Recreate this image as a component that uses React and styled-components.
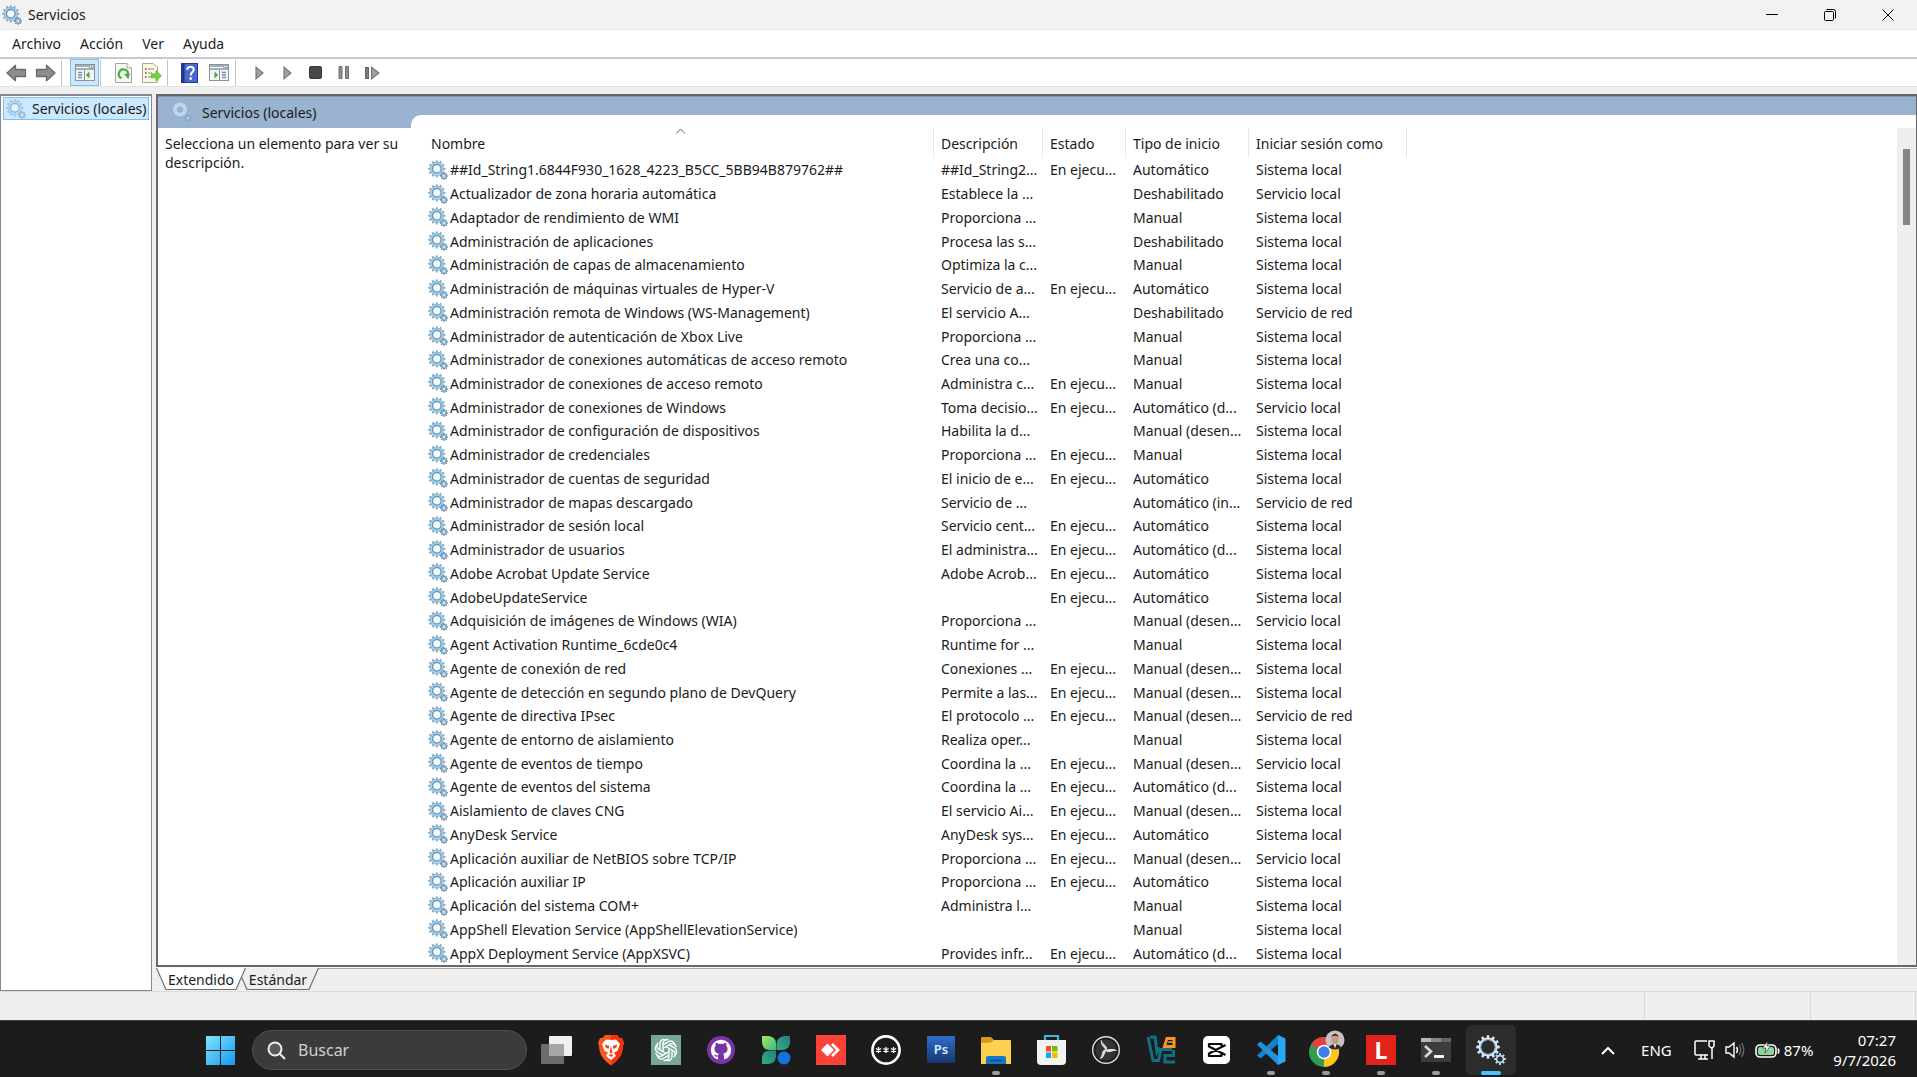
import React from 'react';
import styled, { createGlobalStyle } from 'styled-components';

const Global = createGlobalStyle`
  * { box-sizing: border-box; }
  html, body, #root { height: 100%; }
  body { margin: 0; font-family: "Noto Sans", "Open Sans", sans-serif; font-size: 14px; line-height: 19px; color: #1b1b1b; overflow: hidden; }
  button { font: inherit; color: inherit; background: none; border: 0; padding: 0; margin: 0; display: inline-flex; align-items: center; justify-content: center; }
  svg { display: block; flex: none; }
`;

const Screen = styled.div`
  height: 100%;
  display: flex;
  flex-direction: column;
  background: #efefef;
`;
const Window = styled.main`
  flex: 1;
  display: flex;
  flex-direction: column;
`;
const TitleBar = styled.header`
  height: 30px;
  display: flex;
  align-items: center;
  background: #f2f2f2;
  border-bottom: 1px solid #e6e6e6;
  padding-left: 2px;
`;
const Title = styled.h1`
  flex: 1;
  margin: 0;
  padding-left: 6px;
  font-size: 14px;
  line-height: 19px;
  font-weight: 400;
`;
const CaptionButton = styled.button`
  width: 58px;
  height: 29px;
`;
const MenuBar = styled.nav`
  height: 29px;
  display: flex;
  align-items: center;
  gap: 19px;
  padding: 0 12px;
  background: #fff;
  border-bottom: 2px solid #c9c9c9;
`;
const ToolBar = styled.div`
  height: 28px;
  display: flex;
  align-items: center;
  background: #fff;
  border-bottom: 1px solid #e3e3e3;
  padding-left: 2px;
`;
const ToolButton = styled.button`
  width: ${(p) => p.$w || 29}px;
  height: 27px;
  border: 1px solid ${(p) => (p.$on ? '#84bde8' : 'transparent')};
  background: ${(p) => (p.$on ? '#cce6fb' : 'none')};
`;
const ToolDivider = styled.span`
  width: 1px;
  height: 26px;
  background: #c4c4c4;
  margin: 0 ${(p) => p.$r}px 0 ${(p) => p.$l}px;
`;
const Body = styled.div`
  flex: 1;
  display: grid;
  grid-template-columns: 152px 1fr;
  column-gap: 4px;
  padding-top: 7px;
  border-bottom: 1px solid #dcdcdc;
`;
const Tree = styled.aside`
  background: #fff;
  border: 1px solid #82878f;
  border-top-width: 2px;
  padding: 1px 2px;
`;
const TreeItem = styled.button`
  && { justify-content: flex-start; }
  width: 100%;
  height: 23px;
  gap: 6px;
  padding-left: 2px;
  white-space: nowrap;
  background: #cce8ff;
  border: 1px solid #7cc0f2;
`;
const Content = styled.section`
  display: flex;
  flex-direction: column;
  min-width: 0;
`;
const Frame = styled.div`
  flex: 1;
  display: grid;
  grid-template-columns: 253px 1fr;
  background: #9ab3d1;
  border: 2px solid #686868;
  border-right-width: 1px;
  box-shadow: inset 0 1px 0 #8a929c;
`;
const Side = styled.div`
  display: flex;
  flex-direction: column;
`;
const SideHead = styled.div`
  height: 32px;
  display: flex;
  align-items: center;
  gap: 10px;
  padding-left: 14px;
`;
const SideText = styled.p`
  flex: 1;
  margin: 0;
  background: #fff;
  padding: 6px 6px 6px 7px;
`;
const ListPane = styled.div`
  margin-top: 19px;
  background: #fff;
  border-top-left-radius: 10px;
  display: grid;
  grid-template-columns: 1fr 19px;
`;
const Table = styled.table`
  display: flex;
  flex-direction: column;
  padding-top: 13px;
`;
const columns = '523px 109px 83px 123px 158px';
const Head = styled.thead`
  display: block;
`;
const HeadRow = styled.tr`
  display: grid;
  grid-template-columns: ${columns};
  height: 30px;
`;
const HeadCell = styled.th`
  position: relative;
  font-weight: 400;
  text-align: left;
  padding: 6px 0 0 ${(p) => (p.$first ? 20 : 7)}px;
  border-right: 1px solid #e9e9e9;
`;
const SortMark = styled.svg`
  position: absolute;
  top: 0;
  left: calc(50% + 3px);
`;
const Rows = styled.tbody`
  flex: 1;
  display: grid;
  grid-auto-rows: minmax(23px, 1fr);
`;
const Row = styled.tr`
  display: grid;
  grid-template-columns: ${columns};
  align-items: center;
`;
const Cell = styled.td`
  padding: 0 0 0 7px;
  white-space: nowrap;
  overflow: hidden;
`;
const NameCell = styled(Cell)`
  display: flex;
  align-items: center;
  gap: 2px;
  padding-left: 17px;
`;
const ScrollTrack = styled.div`
  margin-top: 13px;
  background: #efefef;
  display: flex;
  justify-content: center;
  padding-top: 21px;
`;
const ScrollThumb = styled.div`
  width: 7px;
  height: 76px;
  background: #868686;
`;
const Tabs = styled.div`
  height: 24px;
  display: flex;
  border-top: 1px solid #fafafa;
  box-shadow: inset 0 1px 0 #a9a9a9;
`;
const Tab = styled.button`
  position: relative;
  width: ${(p) => p.$w}px;
  height: 22px;
  margin-left: ${(p) => p.$pull}px;
  z-index: ${(p) => (p.$on ? 1 : 0)};
`;
const TabShape = styled.svg`
  position: absolute;
  inset: 0;
`;
const TabText = styled.span`
  position: relative;
`;
const StatusBar = styled.footer`
  height: 28px;
  display: grid;
  grid-template-columns: 1fr 166px 105px 1px;
`;
const StatusPart = styled.span`
  border-right: 1px solid #dadada;
`;
const TaskBar = styled.footer`
  height: 57px;
  display: flex;
  align-items: center;
  background: #1c1c1c;
  border-top: 1px solid #3c4242;
  color: #fff;
  padding: 2px 21px 0 192px;
`;
const StartButton = styled.button`
  width: 56px;
  height: 48px;
`;
const Search = styled.label`
  width: 275px;
  height: 40px;
  margin-left: 4px;
  display: flex;
  align-items: center;
  gap: 12px;
  padding: 0 14px;
  border: 1px solid #505050;
  border-radius: 20px;
  background: #3b3b3b;
`;
const SearchInput = styled.input`
  width: 180px;
  border: 0;
  padding: 0;
  outline: 0;
  background: none;
  font: inherit;
  font-size: 16px;
  color: #d0d0d0;
  &::placeholder { color: #d0d0d0; opacity: 1; }
`;
const Apps = styled.div`
  display: flex;
  gap: 5px;
  margin-left: 4px;
`;
const AppButton = styled.button`
  position: relative;
  width: 50px;
  height: 50px;
  border-radius: 5px;
  background: ${(p) => (p.$state === 'active' ? '#2c2c2c' : 'none')};
  &::after {
    content: "";
    display: ${(p) => (p.$state ? 'block' : 'none')};
    position: absolute;
    bottom: 0;
    width: ${(p) => (p.$state === 'active' ? 20 : 8)}px;
    height: 4px;
    border-radius: 2px;
    background: ${(p) => (p.$state === 'active' ? '#4cc2ff' : '#9a9a9a')};
  }
`;
const Tray = styled.div`
  margin-left: auto;
  display: flex;
  align-items: center;
  font-size: 15px;
`;
const TrayButton = styled.button`
  height: 40px;
  gap: 10px;
  margin-right: ${(p) => p.$mr}px;
`;
const Battery = styled.span`
  display: flex;
  align-items: center;
  gap: 4px;
`;
const Clock = styled.time`
  line-height: 20px;
  display: flex;
  flex-direction: column;
  align-items: flex-end;
`;

const gearPath = (cx, cy, r, teeth, depth) => {
  const points = [];
  for (let i = 0; i < teeth; i += 1) {
    [[-0.28, r - depth], [-0.2, r], [0.2, r], [0.28, r - depth]].forEach(([o, rad]) => {
      const a = ((i + o) / teeth) * Math.PI * 2;
      points.push(`${(cx + Math.sin(a) * rad).toFixed(2)} ${(cy - Math.cos(a) * rad).toFixed(2)}`);
    });
  }
  return `M${points.join('L')}Z`;
};
const bigGear = gearPath(8.8, 8.8, 8.7, 12, 1.7);
const smallGear = gearPath(16, 16, 4, 8, 1.1);
const brightGear = gearPath(8, 8, 7.9, 12, 1.6);

const Gears = ({ pale = false }) => (
  <svg width="20" height="20" viewBox="0 0 20 20" opacity={pale ? 0.6 : 1} aria-hidden="true">
    <path d={bigGear} fill="#86acc8" />
    <circle cx="8.8" cy="8.8" r="6.4" fill="#a9d3ec" />
    <circle cx="8.8" cy="8.8" r="4.4" fill="none" stroke="#6793b4" strokeWidth="1.1" />
    <circle cx="8.8" cy="8.8" r="3.3" fill="#f6fbfe" />
    <path d={smallGear} fill="#7296b2" />
    <circle cx="16" cy="16" r="1.9" fill="#a9cbe0" />
    <circle cx="16" cy="16" r="0.9" fill="#e4f1f8" />
  </svg>
);

const BrightGears = () => (
  <svg width="30" height="30" viewBox="0 0 20 20" aria-hidden="true">
    <path fillRule="evenodd" d={`${brightGear}M3.400 8A4.600 4.600 0 1 0 12.600 8A4.600 4.600 0 1 0 3.400 8Z`} fill="#d5e8f7" />
    <circle cx="8" cy="8" r="5" fill="none" stroke="#94b8d8" strokeWidth="0.7" />
    <path fillRule="evenodd" d={`${smallGear}M14.300 16A1.700 1.700 0 1 0 17.700 16A1.700 1.700 0 1 0 14.300 16Z`} fill="#b9d4ec" />
  </svg>
);

const HeaderGears = () => (
  <svg width="20" height="20" viewBox="0 0 20 20" aria-hidden="true">
    <circle cx="8" cy="7.5" r="5.6" fill="none" stroke="#b9d9ea" strokeWidth="2.8" />
    <circle cx="8" cy="7.5" r="4" fill="none" stroke="#dcecf5" strokeWidth="0.8" />
    <path d={smallGear} fill="#86aac6" />
    <circle cx="16" cy="16" r="1.3" fill="#b9d4e6" />
  </svg>
);

const Arrow = ({ flip }) => (
  <svg width="21" height="18" viewBox="0 0 21 18" aria-hidden="true">
    <path
      transform={flip ? 'translate(21 0) scale(-1 1)' : undefined}
      d="M1 9L9.5 1.2V5.5H19.5V12.5H9.5V16.8Z" fill="#8d8d8d" stroke="#6b6b6b" strokeWidth="1.3" strokeLinejoin="round"
    />
  </svg>
);

const PaneIcon = ({ flip }) => (
  <svg width="20" height="17" viewBox="0 0 20 17" aria-hidden="true">
    <rect x="0.5" y="0.5" width="19" height="16" fill="#f3f4f5" stroke="#8b949c" />
    <rect x="1" y="1" width="18" height="5" fill="#a4adb5" />
    <path d="M1 3.500H14M15 2.500H16M17 2.500H18" stroke="#fff" strokeWidth="1" />
    <g transform={flip ? 'translate(20 0) scale(-1 1)' : undefined}>
      <path d="M9.500 6V16" stroke="#8b949c" />
      <path d="M3 8.500H7M3 11H7M3 13.500H7" stroke="#6f93bd" strokeWidth="1.300" />
      <path d="M14.500 7.500V14.500L10.800 11Z" fill="#3fae2a" />
    </g>
  </svg>
);

const RefreshIcon = () => (
  <svg width="17" height="20" viewBox="0 0 17 20" aria-hidden="true">
    <path d="M0.5 0.5H12L16.5 5V19.5H0.5Z" fill="#f7f7f5" stroke="#a5a5a5" />
    <path d="M12 0.500V5H16.500" fill="#fff" stroke="#a5a5a5" />
    <path d="M6.500 15.200A4.600 4.600 0 1 1 13 11.500" fill="none" stroke="#3fb53a" strokeWidth="2.200" />
    <path d="M9 11L15 10.500L13.300 16.200Z" fill="#3fb53a" />
  </svg>
);

const ExportIcon = () => (
  <svg width="20" height="20" viewBox="0 0 20 20" aria-hidden="true">
    <path d="M0.5 0.5H11L15.5 4V19.5H0.5Z" fill="#faf6df" stroke="#ada88f" />
    <path d="M3 6H4.5M3 10H4.5M3 14H4.5" stroke="#555" strokeWidth="1.5" />
    <path d="M6 6H12M6 10H10M6 14H10" stroke="#8c8c8c" strokeWidth="1.2" />
    <path d="M9.5 10.8H14V7.6L19.5 12.8L14 18V14.8H9.5Z" fill="#6fd13c" stroke="#48ae28" strokeWidth="0.6" />
  </svg>
);

const HelpIcon = () => (
  <svg width="17" height="20" viewBox="0 0 17 20" aria-hidden="true">
    <rect x="0.5" y="0.5" width="16" height="19" fill="#4a69cc" stroke="#24398c" />
    <path d="M2 1V19" stroke="#20368e" strokeWidth="3" />
    <path d="M6.300 6.800C6.300 2.800 12.800 2.900 12.800 6.600C12.800 9 9.700 9.200 9.700 12.400" fill="none" stroke="#fff" strokeWidth="2" />
    <circle cx="9.700" cy="15.600" r="1.300" fill="#fff" />
  </svg>
);

const PlayIcon = () => (
  <svg width="9" height="14" viewBox="0 0 9 14" aria-hidden="true">
    <path d="M1 1.2L8 7L1 12.8Z" fill="#a2a2a2" stroke="#747474" strokeWidth="1.1" />
  </svg>
);
const StopIcon = () => (
  <svg width="13" height="13" viewBox="0 0 13 13" aria-hidden="true">
    <rect x="0.5" y="0.5" width="12" height="12" rx="1.5" fill="#484848" stroke="#3a3a3a" />
  </svg>
);
const PauseIcon = () => (
  <svg width="12" height="13" viewBox="0 0 12 13" aria-hidden="true">
    <path d="M1 0.5H4V12.5H1ZM7.5 0.5H10.5V12.5H7.5Z" fill="#8e8e8e" stroke="#707070" />
  </svg>
);
const RestartIcon = () => (
  <svg width="15" height="14" viewBox="0 0 15 14" aria-hidden="true">
    <rect x="0.5" y="1.5" width="3" height="11" fill="#7a7a7a" stroke="#666" />
    <path d="M6.5 1.2L14 7L6.5 12.8Z" fill="#a2a2a2" stroke="#747474" strokeWidth="1.1" />
  </svg>
);

const TabEdge = ({ w, on }) => (
  <TabShape width={w} height="22" viewBox={`0 0 ${w} 22`} aria-hidden="true">
    <path d={`M0 0L10 21.500H${w - 10}L${w} 0`} fill={on ? '#fff' : '#efefef'} />
    <path d={`M0.500 0L10 21.500H${w - 10}L${w - 0.5} 0`} fill="none" stroke="#707070" strokeWidth="1.200" />
  </TabShape>
);

const appIcons = [
  ['Vista de tareas', '', (
    <svg width="32" height="30" viewBox="0 0 32 30">
      <rect x="9" y="1" width="23" height="20" rx="1" fill="#f0f0f0" />
      <rect x="1" y="9" width="23" height="20" rx="1" fill="#6b6b6b" />
      <rect x="9" y="9" width="15" height="12" fill="#a6a6a6" />
    </svg>
  )],
  ['Brave', '', (
    <svg width="28" height="32" viewBox="0 0 28 32">
      <path d="M8 1H20L22.5 4L25 4L27 9L26 12C25.500 20 23 25 14 31.500C5 25 2.500 20 2 12L1 9L3 4L5.500 4Z" fill="#f9571c" />
      <path d="M14 1H20L22.500 4H25L27 9L26 12C25.500 20 23 25 14 31.500Z" fill="#fb2f10" />
      <path d="M14 6L19 5.500L23 10L21.500 14L20.500 17L17 18.500L19 22L14 26L9 22L11 18.500L7.500 17L5 10L9 5.500Z" fill="#fff" />
      <path d="M8 10.500L12.500 12L11.500 15L8.500 13.500ZM20 10.500L15.500 12L16.500 15L19.500 13.500ZM14 12L15.500 18.500L14 19.500L12.500 18.500ZM11.500 21L14 20L16.500 21L14 23Z" fill="#f9471c" />
    </svg>
  )],
  ['ChatGPT', '', (
    <svg width="30" height="30" viewBox="0 0 30 30">
      <rect width="30" height="30" fill="#74a99a" />
      <g fill="none" stroke="#fff" strokeWidth="1.4" strokeLinejoin="round">
        {[0, 60, 120, 180, 240, 300].map((a) => (
          <path key={a} transform={`rotate(${a} 15 15)`} d="M12 16.700V9.800L17.500 6.600A4.200 4.200 0 0 1 23.800 10.300M12 9.800L12 8A4.200 4.200 0 0 1 17.500 4.700" />
        ))}
      </g>
    </svg>
  )],
  ['GitHub Desktop', '', (
    <svg width="28" height="28" viewBox="0 0 28 28">
      <circle cx="14" cy="14" r="14" fill="#7a35a5" />
      <circle cx="14" cy="14" r="10.200" fill="#fff" />
      <path d="M11 24V20.500C8 21.200 7.600 19.200 6.500 18.500C8.500 18.200 9 20 11 19.300C11.200 18.400 11.600 18 12 17.700C8.500 17.200 7.500 15.500 7.500 12.800C7.500 11.500 8 10.500 8.700 9.800C8.400 8.900 8.400 7.900 8.900 6.800C10 6.800 11 7.500 11.900 8.100Q14 7.600 16.100 8.100C17 7.500 18 6.800 19.100 6.800C19.600 7.900 19.600 8.900 19.300 9.800C20 10.500 20.500 11.500 20.500 12.800C20.500 15.500 19.500 17.200 16 17.700C16.700 18.200 17 19 17 20V24Z" fill="#7a35a5" />
    </svg>
  )],
  ['Clover', '', (
    <svg width="30" height="30" viewBox="0 0 30 30">
      <defs>
        <linearGradient id="leaf" x1="0" y1="0" x2="1" y2="1"><stop stopColor="#a6e65a" /><stop offset="1" stopColor="#3fb98a" /></linearGradient>
        <linearGradient id="leafDark" x1="0" y1="1" x2="1" y2="0"><stop stopColor="#2fae7c" /><stop offset="1" stopColor="#267f80" /></linearGradient>
      </defs>
      <path d="M1 1H8Q15 2 15 9V15H8Q1 14 1 7Z" fill="url(#leaf)" />
      <path d="M29 1V8Q28 15 21 15H15.500V9Q16 2 23 1Z" fill="url(#leafDark)" />
      <path d="M1 29V22Q2 15.500 9 15.500H15V22Q14 29 7 29Z" fill="url(#leafDark)" />
      <circle cx="23" cy="23" r="6.500" fill="#1273df" />
    </svg>
  )],
  ['AnyDesk', '', (
    <svg width="30" height="30" viewBox="0 0 30 30">
      <rect width="30" height="30" fill="#fb4238" />
      <path d="M5 15L11.500 8.500L18 15L11.500 21.500Z" fill="#fff" />
      <path d="M16 9L22 15L16 21" fill="none" stroke="#fff" strokeWidth="2.600" />
    </svg>
  )],
  ['Contraseñas', '', (
    <svg width="30" height="30" viewBox="0 0 30 30">
      <circle cx="15" cy="15" r="13.600" fill="none" stroke="#fff" strokeWidth="2.600" />
      {[7.5, 15, 22.500].map((x) => (
        <path key={x} d={`M${x} 12V18M${x - 2.600} 13.500L${x + 2.600} 16.500M${x + 2.600} 13.500L${x - 2.600} 16.500`} stroke="#fff" strokeWidth="1.300" />
      ))}
    </svg>
  )],
  ['Photoshop', '', (
    <svg width="28" height="28" viewBox="0 0 28 28">
      <defs>
        <linearGradient id="ps" x1="0" y1="0" x2="0" y2="1"><stop stopColor="#2f6fc9" /><stop offset="1" stopColor="#17356f" /></linearGradient>
      </defs>
      <rect width="28" height="27" rx="1" fill="url(#ps)" />
      <text x="14" y="18" textAnchor="middle" fontSize="13" fontWeight="600" fill="#d6ecff">Ps</text>
    </svg>
  )],
  ['Explorador de archivos', 'open', (
    <svg width="30" height="30" viewBox="0 0 30 30">
      <path d="M0 3Q0 2 1 2H10L13 5V9H0Z" fill="#d89a12" />
      <path d="M0 8L10 7.500L13 5H29Q30 5 30 6V29H0Z" fill="#fdd050" />
      <path d="M5 29V23Q5 21 7 21H23Q25 21 25 23V29Z" fill="#1676c8" />
      <path d="M9 25.500H21" stroke="#0b4d8e" strokeWidth="1.500" />
    </svg>
  )],
  ['Microsoft Store', '', (
    <svg width="29" height="32" viewBox="0 0 29 32">
      <path d="M8 7V2H21V7" fill="none" stroke="#3cb4ea" strokeWidth="2.200" />
      <path d="M0 6H29V27Q29 31 25 31H4Q0 31 0 27Z" fill="#f2f2f2" />
      <path d="M9 12H14V17.500H9Z" fill="#f05024" /><path d="M15 12H20.500V17.500H15Z" fill="#7db900" />
      <path d="M9 18.500H14V24H9Z" fill="#1ba4ea" /><path d="M15 18.500H20.500V24H15Z" fill="#fdb900" />
    </svg>
  )],
  ['OBS Studio', '', (
    <svg width="30" height="30" viewBox="0 0 30 30">
      <circle cx="15" cy="15" r="13.300" fill="#1e1c1e" stroke="#dedede" strokeWidth="1.400" />
      <circle cx="15" cy="15" r="10.500" fill="#353335" />
      {[0, 120, 240].map((a) => (
        <path key={a} transform={`rotate(${a} 15 15)`} d="M15 15C14 12.500 10.500 11.500 10.200 5.500C11 9 14 9.500 15.500 12.500Z" fill="#e0e0e0" stroke="#e0e0e0" strokeWidth="1" />
      ))}
    </svg>
  )],
  ['VirtualBox', '', (
    <svg width="30" height="30" viewBox="0 0 30 30">
      <path d="M4 2H9L11 17L13.500 12.500M2 2L7 25.500H12.500L15 14.500H26M29 27H19V20.500H27.500V15" fill="none" stroke="#10707f" strokeWidth="3" />
      <path d="M21 3.500H28V11.500H18.500Z" fill="none" stroke="#f2952a" strokeWidth="3" /><path d="M22 7H27" stroke="#f2952a" strokeWidth="1.500" />
    </svg>
  )],
  ['CapCut', '', (
    <svg width="27" height="28" viewBox="0 0 27 28">
      <rect width="27" height="28" rx="5" fill="#fff" />
      <path d="M22.500 9L6 17.500V20H18.500V18M22.500 19L6 10.500V8H18.500V10" fill="none" stroke="#080808" strokeWidth="2.200" strokeLinejoin="round" />
    </svg>
  )],
  ['Visual Studio Code', 'open', (
    <svg width="30" height="32" viewBox="0 0 30 32">
      <path d="M22 1V10L4.500 24.500L1 21.500Z" fill="#1482cc" />
      <path d="M22 31V22L4.500 7.500L1 10.500Z" fill="#1c92dd" />
      <path d="M22 1L29.500 4.500V27.500L22 31Z" fill="#2aa7f3" />
    </svg>
  )],
  ['Google Chrome', 'open', (
    <svg width="38" height="40" viewBox="0 0 38 40">
      <circle cx="17" cy="22" r="15" fill="#2f9e4a" />
      <path d="M17 22L4 14.500A15 15 0 0 1 30 14.500Z" fill="#e5413a" />
      <path d="M17 22L30 14.500A15 15 0 0 1 17 37Z" fill="#fbc620" />
      <circle cx="17" cy="22" r="7.300" fill="#fff" /><circle cx="17" cy="22" r="5.700" fill="#3c7de8" />
      <circle cx="28" cy="10" r="9.500" fill="#c6c2c2" />
      <path d="M21.500 17Q28 11 34.500 17Q28 22 21.500 17Z" fill="#2b2b2f" />
      <path d="M26.500 14H29.500L28 18.500Z" fill="#eee" />
      <ellipse cx="28" cy="9" rx="3.600" ry="5.200" fill="#c99a85" /><path d="M24 7Q28 0 32 7Q28 4 24 7Z" fill="#2a2424" />
    </svg>
  )],
  ['Lightshot', 'open', (
    <svg width="30" height="30" viewBox="0 0 30 30">
      <rect width="30" height="30" fill="#e2231a" />
      <text x="15" y="23.500" textAnchor="middle" fontSize="23" fontWeight="700" fill="#fff">L</text>
    </svg>
  )],
  ['Terminal', 'open', (
    <svg width="30" height="24" viewBox="0 0 30 24">
      <rect width="30" height="24" rx="1.500" fill="#3c3c3c" />
      <path d="M0 0H10V4H0Z" fill="#b8b8b8" /><path d="M10 0H20V4H10Z" fill="#888" /><path d="M20 0H30V4H20Z" fill="#666" />
      <path d="M4 8L10 13.500L4 19" fill="none" stroke="#d8d8d8" strokeWidth="2.600" />
      <path d="M13 18.500H23" stroke="#fff" strokeWidth="2.800" />
    </svg>
  )],
  ['Servicios', 'active', <BrightGears />],
];

const A = 'Automático';
const M = 'Manual';
const D = 'Deshabilitado';
const MD = 'Manual (desen...';
const AD = 'Automático (d...';
const R = 'En ejecu...';
const SL = 'Sistema local';
const VL = 'Servicio local';
const VR = 'Servicio de red';
const services = [
  ['##Id_String1.6844F930_1628_4223_B5CC_5BB94B879762##', '##Id_String2...', R, A, SL],
  ['Actualizador de zona horaria automática', 'Establece la ...', '', D, VL],
  ['Adaptador de rendimiento de WMI', 'Proporciona ...', '', M, SL],
  ['Administración de aplicaciones', 'Procesa las s...', '', D, SL],
  ['Administración de capas de almacenamiento', 'Optimiza la c...', '', M, SL],
  ['Administración de máquinas virtuales de Hyper-V', 'Servicio de a...', R, A, SL],
  ['Administración remota de Windows (WS-Management)', 'El servicio A...', '', D, VR],
  ['Administrador de autenticación de Xbox Live', 'Proporciona ...', '', M, SL],
  ['Administrador de conexiones automáticas de acceso remoto', 'Crea una co...', '', M, SL],
  ['Administrador de conexiones de acceso remoto', 'Administra c...', R, M, SL],
  ['Administrador de conexiones de Windows', 'Toma decisio...', R, AD, VL],
  ['Administrador de configuración de dispositivos', 'Habilita la d...', '', MD, SL],
  ['Administrador de credenciales', 'Proporciona ...', R, M, SL],
  ['Administrador de cuentas de seguridad', 'El inicio de e...', R, A, SL],
  ['Administrador de mapas descargado', 'Servicio de ...', '', 'Automático (in...', VR],
  ['Administrador de sesión local', 'Servicio cent...', R, A, SL],
  ['Administrador de usuarios', 'El administra...', R, AD, SL],
  ['Adobe Acrobat Update Service', 'Adobe Acrob...', R, A, SL],
  ['AdobeUpdateService', '', R, A, SL],
  ['Adquisición de imágenes de Windows (WIA)', 'Proporciona ...', '', MD, VL],
  ['Agent Activation Runtime_6cde0c4', 'Runtime for ...', '', M, SL],
  ['Agente de conexión de red', 'Conexiones ...', R, MD, SL],
  ['Agente de detección en segundo plano de DevQuery', 'Permite a las...', R, MD, SL],
  ['Agente de directiva IPsec', 'El protocolo ...', R, MD, VR],
  ['Agente de entorno de aislamiento', 'Realiza oper...', '', M, SL],
  ['Agente de eventos de tiempo', 'Coordina la ...', R, MD, VL],
  ['Agente de eventos del sistema', 'Coordina la ...', R, AD, SL],
  ['Aislamiento de claves CNG', 'El servicio Ai...', R, MD, SL],
  ['AnyDesk Service', 'AnyDesk sys...', R, A, SL],
  ['Aplicación auxiliar de NetBIOS sobre TCP/IP', 'Proporciona ...', R, MD, VL],
  ['Aplicación auxiliar IP', 'Proporciona ...', R, A, SL],
  ['Aplicación del sistema COM+', 'Administra l...', '', M, SL],
  ['AppShell Elevation Service (AppShellElevationService)', '', '', M, SL],
  ['AppX Deployment Service (AppXSVC)', 'Provides infr...', R, AD, SL],
];

export default function App() {
  return (
    <Screen>
      <Global />
      <Window>
        <TitleBar>
          <Gears />
          <Title>Servicios</Title>
          <CaptionButton aria-label="Minimizar">
            <svg width="12" height="12" viewBox="0 0 12 12"><path d="M0 5.500H12" stroke="#000" /></svg>
          </CaptionButton>
          <CaptionButton aria-label="Restaurar">
            <svg width="12" height="12" viewBox="0 0 12 12" fill="none" stroke="#000">
              <rect x="0.500" y="2.500" width="9" height="9" rx="1" />
              <path d="M2.500 0.500H9.500Q11.500 0.500 11.500 2.500V9.500" />
            </svg>
          </CaptionButton>
          <CaptionButton aria-label="Cerrar">
            <svg width="12" height="12" viewBox="0 0 12 12"><path d="M0.500 0.500L11.500 11.500M11.500 0.500L0.500 11.500" stroke="#000" /></svg>
          </CaptionButton>
        </TitleBar>
        <MenuBar>
          <button>Archivo</button>
          <button>Acción</button>
          <button>Ver</button>
          <button>Ayuda</button>
        </MenuBar>
        <ToolBar>
          <ToolButton aria-label="Atrás"><Arrow /></ToolButton>
          <ToolButton aria-label="Adelante"><Arrow flip /></ToolButton>
          <ToolDivider $l={1} $r={8} />
          <ToolButton $on aria-label="Mostrar u ocultar el árbol"><PaneIcon /></ToolButton>
          <ToolDivider $l={1} $r={8} />
          <ToolButton aria-label="Actualizar"><RefreshIcon /></ToolButton>
          <ToolButton $w={28} aria-label="Exportar lista"><ExportIcon /></ToolButton>
          <ToolDivider $l={1} $r={7} />
          <ToolButton aria-label="Ayuda"><HelpIcon /></ToolButton>
          <ToolButton aria-label="Mostrar panel de acciones"><PaneIcon flip /></ToolButton>
          <ToolDivider $l={2} $r={9} />
          <ToolButton $w={28} aria-label="Iniciar"><PlayIcon /></ToolButton>
          <ToolButton $w={28} aria-label="Reanudar"><PlayIcon /></ToolButton>
          <ToolButton $w={28} aria-label="Detener"><StopIcon /></ToolButton>
          <ToolButton aria-label="Pausar"><PauseIcon /></ToolButton>
          <ToolButton aria-label="Reiniciar"><RestartIcon /></ToolButton>
        </ToolBar>
        <Body>
          <Tree>
            <TreeItem><Gears pale />Servicios (locales)</TreeItem>
          </Tree>
          <Content>
            <Frame>
              <Side>
                <SideHead><HeaderGears />Servicios (locales)</SideHead>
                <SideText>Selecciona un elemento para ver su descripción.</SideText>
              </Side>
              <ListPane>
                <Table>
                  <Head>
                    <HeadRow>
                      <HeadCell $first>
                        Nombre
                        <SortMark width="11" height="7" viewBox="0 0 11 7"><path d="M1 5.500L5.500 1L10 5.500" fill="none" stroke="#666" /></SortMark>
                      </HeadCell>
                      <HeadCell>Descripción</HeadCell>
                      <HeadCell>Estado</HeadCell>
                      <HeadCell>Tipo de inicio</HeadCell>
                      <HeadCell>Iniciar sesión como</HeadCell>
                    </HeadRow>
                  </Head>
                  <Rows>
                    {services.map(([name, ...rest]) => (
                      <Row key={name}>
                        <NameCell><Gears />{name}</NameCell>
                        {rest.map((text, i) => <Cell key={i}>{text}</Cell>)}
                      </Row>
                    ))}
                  </Rows>
                </Table>
                <ScrollTrack><ScrollThumb /></ScrollTrack>
              </ListPane>
            </Frame>
            <Tabs>
              <Tab $w={90} $pull={0} $on><TabEdge w={90} on /><TabText>Extendido</TabText></Tab>
              <Tab $w={82} $pull={-9}><TabEdge w={82} /><TabText>Estándar</TabText></Tab>
            </Tabs>
          </Content>
        </Body>
        <StatusBar>
          <StatusPart /><StatusPart /><StatusPart />
        </StatusBar>
      </Window>
      <TaskBar>
        <StartButton aria-label="Inicio">
          <svg width="29" height="29" viewBox="0 0 29 29">
            <defs>
              <linearGradient id="win" x1="0" y1="0" x2="1" y2="1"><stop stopColor="#7fe6fb" /><stop offset="1" stopColor="#1597f3" /></linearGradient>
            </defs>
            <path d="M0 0H14V14H0ZM15 0H29V14H15ZM0 15H14V29H0ZM15 15H29V29H15Z" fill="url(#win)" />
          </svg>
        </StartButton>
        <Search>
          <svg width="19" height="19" viewBox="0 0 19 19" fill="none" stroke="#f0f0f0" strokeWidth="2">
            <circle cx="8" cy="8" r="6.500" fill="#5a5a5a" /><path d="M12.500 12.500L18 18" />
          </svg>
          <SearchInput type="text" placeholder="Buscar" aria-label="Buscar" />
        </Search>
        <Apps>
          {appIcons.map(([name, state, icon]) => (
            <AppButton key={name} aria-label={name} $state={state}>{icon}</AppButton>
          ))}
        </Apps>
        <Tray>
          <TrayButton $mr={26} aria-label="Mostrar iconos ocultos">
            <svg width="14" height="9" viewBox="0 0 14 9"><path d="M1 8L7 2L13 8" fill="none" stroke="#fff" strokeWidth="2" /></svg>
          </TrayButton>
          <TrayButton $mr={22}>ENG</TrayButton>
          <TrayButton $mr={20}>
            <svg width="21" height="20" viewBox="0 0 21 20" fill="none" stroke="#fff" strokeWidth="1.500">
              <path d="M13 1H2Q1 1 1 2V14Q1 15 2 15H14M7 15V19M11 15V19M4 19H14M18 9V19" />
              <path d="M15 1H20V6L18 8.500L15 6Z" />
            </svg>
            <svg width="20" height="18" viewBox="0 0 20 18" fill="none" stroke="#fff" strokeWidth="1.400">
              <path d="M1 6H4L9 2V16L4 12H1Z" /><path d="M11.500 6Q13.500 9 11.500 12" />
              <path d="M14 4Q17.500 9 14 14M16.500 2Q21 9 16.500 16" stroke="#666" />
            </svg>
            <Battery>
              <svg width="25" height="18" viewBox="0 0 25 18">
                <rect x="1" y="4" width="20" height="12" rx="4" fill="none" stroke="#fff" strokeWidth="1.600" />
                <rect x="3" y="6" width="16" height="8" rx="2" fill="#8fd694" />
                <path d="M23 7.500Q24.500 10 23 12.500" stroke="#fff" strokeWidth="1.600" fill="none" />
                <path d="M12.500 0L7.500 7H11L10 12L15.500 5H12Z" fill="#fff" stroke="#1c1c1c" strokeWidth="0.600" />
              </svg>
              87%
            </Battery>
          </TrayButton>
          <Clock><span>07:27</span><span>9/7/2026</span></Clock>
        </Tray>
      </TaskBar>
    </Screen>
  );
}
